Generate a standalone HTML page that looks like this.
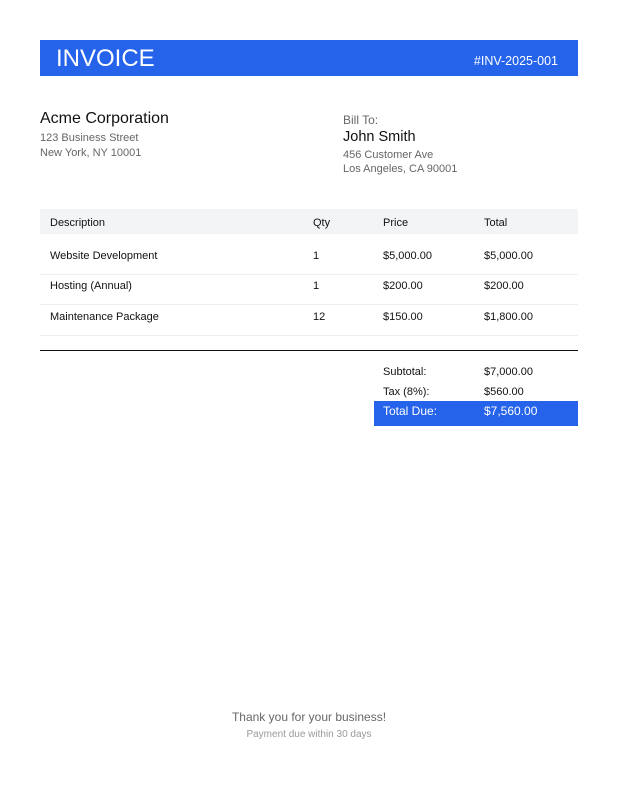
<!DOCTYPE html>
<html><head><meta charset="utf-8"><style>
*{margin:0;padding:0;box-sizing:border-box}
body{width:618px;height:800px;background:#fff;font-family:"Liberation Sans",Arial,sans-serif;position:relative;overflow:hidden}
.a{position:absolute;white-space:nowrap;line-height:1}
.g{color:#666}
.t{font-size:11px;color:#111}
.sep{position:absolute;left:40px;width:538px;height:1px;background:#eee}
</style></head><body>
<div class="a" style="left:40px;top:40px;width:538px;height:36px;background:#2563eb"></div>
<div class="a" style="left:56px;top:47px;font-size:24px;color:#fff">INVOICE</div>
<div class="a" style="right:60px;top:55px;font-size:12.5px;color:#fff">#INV-2025-001</div>

<div class="a" style="left:40px;top:111px;font-size:16px;color:#111">Acme Corporation</div>
<div class="a g" style="left:40px;top:133px;font-size:11px">123 Business Street</div>
<div class="a g" style="left:40px;top:148px;font-size:11px">New York, NY 10001</div>

<div class="a g" style="left:343px;top:114px;font-size:12px">Bill To:</div>
<div class="a" style="left:343px;top:130px;font-size:14.5px;color:#111">John Smith</div>
<div class="a g" style="left:343px;top:150px;font-size:11px">456 Customer Ave</div>
<div class="a g" style="left:343px;top:164px;font-size:11px">Los Angeles, CA 90001</div>

<div class="a" style="left:40px;top:209px;width:538px;height:25px;background:#f3f4f6"></div>
<div class="a t" style="left:50px;top:218px">Description</div>
<div class="a t" style="left:313px;top:218px">Qty</div>
<div class="a t" style="left:383px;top:218px">Price</div>
<div class="a t" style="left:484px;top:218px">Total</div>

<div class="a t" style="left:50px;top:251px">Website Development</div>
<div class="a t" style="left:313px;top:251px">1</div>
<div class="a t" style="left:383px;top:251px">$5,000.00</div>
<div class="a t" style="left:484px;top:251px">$5,000.00</div>
<div class="sep" style="top:274px"></div>
<div class="a t" style="left:50px;top:281px">Hosting (Annual)</div>
<div class="a t" style="left:313px;top:281px">1</div>
<div class="a t" style="left:383px;top:281px">$200.00</div>
<div class="a t" style="left:484px;top:281px">$200.00</div>
<div class="sep" style="top:304px"></div>
<div class="a t" style="left:50px;top:312px">Maintenance Package</div>
<div class="a t" style="left:313px;top:312px">12</div>
<div class="a t" style="left:383px;top:312px">$150.00</div>
<div class="a t" style="left:484px;top:312px">$1,800.00</div>
<div class="sep" style="top:335px"></div>

<div class="a" style="left:40px;top:350px;width:538px;height:1px;background:#111"></div>

<div class="a t" style="left:383px;top:367px">Subtotal:</div>
<div class="a t" style="left:484px;top:367px">$7,000.00</div>
<div class="a t" style="left:383px;top:387px">Tax (8%):</div>
<div class="a t" style="left:484px;top:387px">$560.00</div>
<div class="a" style="left:374px;top:401px;width:204px;height:25px;background:#2563eb"></div>
<div class="a" style="left:383px;top:405px;font-size:12px;color:#fff">Total Due:</div>
<div class="a" style="left:484px;top:405px;font-size:12px;color:#fff">$7,560.00</div>

<div class="a" style="left:0;width:618px;text-align:center;top:711px;font-size:12px;color:#666">Thank you for your business!</div>
<div class="a" style="left:0;width:618px;text-align:center;top:730px;font-size:10px;color:#999">Payment due within 30 days</div>
</body></html>
